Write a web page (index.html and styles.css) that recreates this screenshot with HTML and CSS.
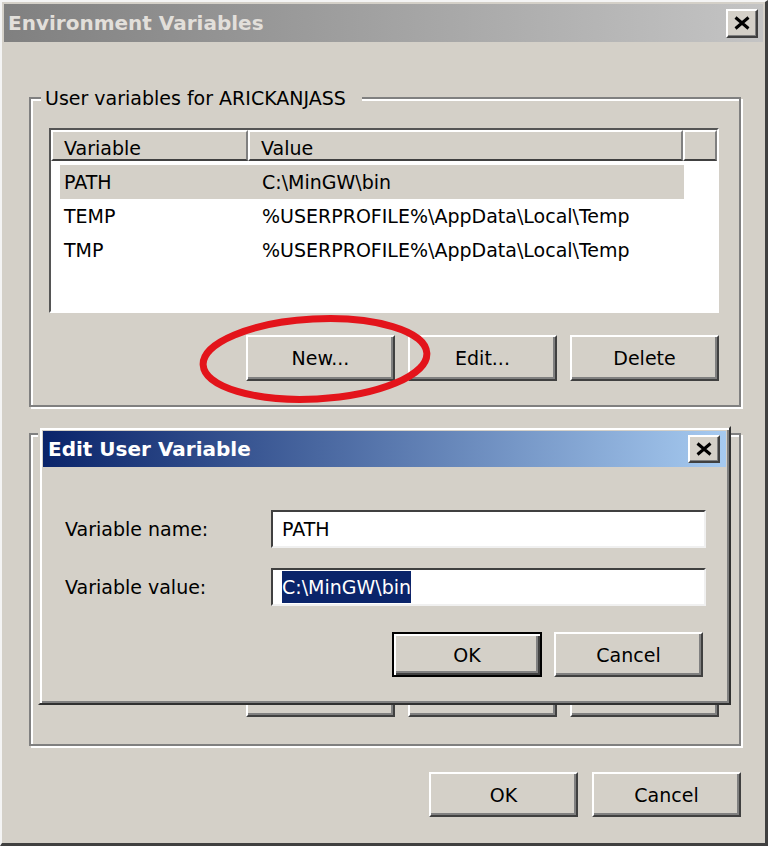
FILE: index.html
```html
<!DOCTYPE html>
<html lang="en">
<head>
    <meta charset="UTF-8">
    <meta name="viewport" content="width=device-width, initial-scale=1.0">
    <title>Environment Variables</title>
    <link rel="stylesheet" href="styles.css">
</head>
<body>
    <div class="window">
        <div class="titlebar">
            <span class="title">Environment Variables</span>
            <span class="close-btn">
                <svg width="16" height="14" viewBox="0 0 16 14"><path d="M1.5 1.5 L14.5 12.5 M14.5 1.5 L1.5 12.5" stroke="#000" stroke-width="3" fill="none"/></svg>
            </span>
        </div>
        <div class="window-body">
            <fieldset class="group">
                <legend>User variables for ARICKANJASS</legend>
                <div class="listview">
                    <div class="list-header">
                        <div class="col col-name">Variable</div>
                        <div class="col col-value">Value</div>
                        <div class="col col-rest"></div>
                    </div>
                    <div class="list-rows">
                        <div class="row selected"><span class="cell-name">PATH</span><span>C:\MinGW\bin</span></div>
                        <div class="row"><span class="cell-name">TEMP</span><span>%USERPROFILE%\AppData\Local\Temp</span></div>
                        <div class="row"><span class="cell-name">TMP</span><span>%USERPROFILE%\AppData\Local\Temp</span></div>
                    </div>
                </div>
                <div class="button-row">
                    <button class="btn">New...</button>
                    <button class="btn">Edit...</button>
                    <button class="btn">Delete</button>
                </div>
            </fieldset>
            <!-- system variables group, mostly covered by the edit dialog -->
            <fieldset class="group system">
                <legend class="blank"></legend>
                <div class="listview">
                    <div class="list-header">
                        <div class="col col-name"></div>
                        <div class="col col-value"></div>
                        <div class="col col-rest"></div>
                    </div>
                </div>
                <div class="button-row">
                    <button class="btn" aria-label="New"></button>
                    <button class="btn" aria-label="Edit"></button>
                    <button class="btn" aria-label="Delete"></button>
                </div>
            </fieldset>
            <div class="button-row footer">
                <button class="btn">OK</button>
                <button class="btn">Cancel</button>
            </div>
        </div>

        <svg class="ring" width="238" height="96" viewBox="0 0 238 96">
            <ellipse cx="119" cy="48" rx="112" ry="40" transform="rotate(-3 119 48)" fill="none" stroke="#e3141b" stroke-width="7"/>
        </svg>

        <div class="dialog">
            <div class="titlebar active">
                <span class="title">Edit User Variable</span>
                <span class="close-btn small">
                    <svg width="16" height="14" viewBox="0 0 16 14"><path d="M1.5 1.5 L14.5 12.5 M14.5 1.5 L1.5 12.5" stroke="#000" stroke-width="3" fill="none"/></svg>
                </span>
            </div>
            <div class="dialog-body">
                <div class="form-row">
                    <span class="form-label">Variable name:</span>
                    <div class="field">PATH</div>
                </div>
                <div class="form-row">
                    <span class="form-label">Variable value:</span>
                    <div class="field"><span class="selection">C:\MinGW\bin</span></div>
                </div>
                <div class="button-row dialog-buttons">
                    <button class="btn default">OK</button>
                    <button class="btn">Cancel</button>
                </div>
            </div>
        </div>
    </div>
</body>
</html>
```

FILE: styles.css
```css
* {
    box-sizing: border-box;
    margin: 0;
    padding: 0;
}
body {
    width: 768px;
    height: 846px;
    overflow: hidden;
    font-family: "DejaVu Sans", Verdana, sans-serif;
    font-size: 19px;
    color: #000;
    background-color: #d4d0c8;
}
.window {
    position: relative;
    width: 768px;
    height: 846px;
    background-color: #d4d0c8;
    border-style: solid;
    border-width: 2px 3px 3px 2px;
    border-color: #f4f4f4 #404040 #404040 #f4f4f4;
    padding: 2px 2px 0 2px;
}
.titlebar {
    height: 38px;
    display: flex;
    align-items: center;
    justify-content: space-between;
    padding: 0 5px 0 4px;
    background: linear-gradient(to right, #808080, #c4c4c4);
}
.title {
    font-weight: bold;
    font-size: 20px;
    color: #e2dfda;
}
.titlebar.active {
    height: 36px;
    padding: 0 6px 0 5px;
    background: linear-gradient(to right, #0a246a, #a6caf0);
}
.titlebar.active .title {
    color: #fff;
}
.close-btn {
    width: 32px;
    height: 29px;
    display: flex;
    align-items: center;
    justify-content: center;
    background-color: #d4d0c8;
    border: 2px solid;
    border-color: #fff #404040 #404040 #fff;
    box-shadow: inset -1px -1px #808080;
}
.close-btn.small {
    height: 28px;
}
.window-body {
    padding: 44px 22px 0 25px;
}
.group {
    border: 2px solid #808080;
    box-shadow: 2px 2px 0 #fff, inset 2px 2px 0 #fff;
    padding: 18px 20px 24px 18px;
    min-width: 0;
}
.group legend {
    margin-left: -8px;
    padding: 0 16px 0 4px;
    line-height: 24px;
    background-color: #d4d0c8;
}
.group legend.blank {
    height: 24px;
    width: 160px;
}
.group.system {
    margin-top: 15px;
    padding-bottom: 27px;
}
.listview {
    height: 185px;
    background-color: #fff;
    border: 2px solid;
    border-color: #555 #fff #fff #555;
}
.list-header {
    display: flex;
    height: 31px;
    background-color: #d4d0c8;
}
.list-header .col {
    height: 31px;
    border: 2px solid;
    border-color: #fff #808080 #404040 #fff;
    padding: 5px 0 0 11px;
    line-height: 22px;
}
.col-name {
    width: 197px;
}
.col-value {
    width: 435px;
}
.col-rest {
    flex: 1;
}
.list-rows {
    padding: 4px 0 0 9px;
}
.row {
    display: flex;
    align-items: center;
    width: 624px;
    height: 34px;
    padding-left: 4px;
}
.row.selected {
    background-color: #d4d0c8;
}
.cell-name {
    width: 198px;
}
.button-row {
    display: flex;
    justify-content: flex-end;
    gap: 13px;
    margin-top: 22px;
}
.btn {
    width: 149px;
    height: 46px;
    font: inherit;
    color: #000;
    background-color: #d4d0c8;
    border: 2px solid;
    border-color: #fff #404040 #404040 #fff;
    box-shadow: inset -2px -2px #808080;
}
.button-row.footer {
    margin-top: 26px;
    gap: 14px;
}
.button-row.footer .btn {
    height: 45px;
}
.ring {
    position: absolute;
    left: 194px;
    top: 309px;
}
.dialog {
    position: absolute;
    left: 36px;
    top: 424px;
    width: 693px;
    height: 279px;
    background-color: #d4d0c8;
    border: 2px solid;
    border-color: #d4d0c8 #303030 #303030 #d4d0c8;
    box-shadow: inset 2px 2px #fff, inset -2px -2px #808080;
    padding: 3px;
}
.dialog-body {
    padding: 43px 20px 0 22px;
}
.form-row {
    display: flex;
    align-items: center;
    margin-bottom: 20px;
}
.form-label {
    width: 206px;
}
.field {
    width: 435px;
    height: 38px;
    display: flex;
    align-items: center;
    padding-left: 9px;
    background-color: #fff;
    border: 2px solid;
    border-color: #404040 #f0f0f0 #f0f0f0 #404040;
}
.selection {
    line-height: 32px;
    background-color: #0a246a;
    color: #fff;
}
.dialog-buttons {
    margin-top: 26px;
    padding-right: 3px;
    gap: 12px;
}
.dialog-buttons .btn {
    height: 45px;
}
.btn.default {
    width: 150px;
    border-color: #000;
    box-shadow: inset 2px 2px #fff, inset -2px -2px #404040, inset -4px -4px #808080;
}
```
